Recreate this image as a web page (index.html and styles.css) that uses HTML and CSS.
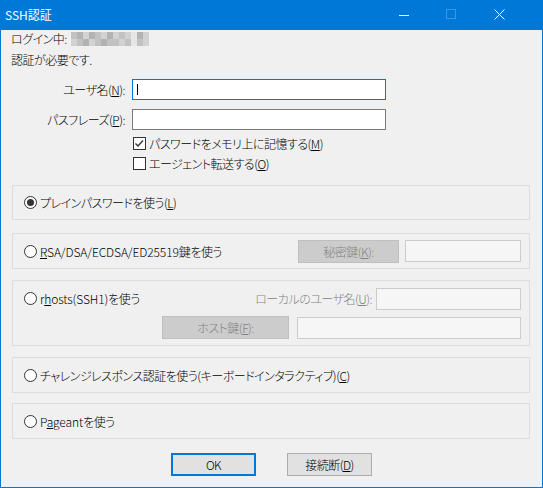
FILE: index.html
```html
<!DOCTYPE html>
<html>
  <head>
    <title>SSH認証</title>
    <link rel="stylesheet" href="styles.css">
  </head>
  <body>
    <div class="window">
      <div class="titlebar">
        <span class="title">SSH認証</span>
        <div class="caption">
          <svg class="cap-min" width="10" height="10"><path d="M0 4.5h10" stroke="#fff"/></svg>
          <svg class="cap-max" width="10" height="10"><rect x=".5" y=".5" width="9" height="9" fill="none" stroke="#7fb6e6" stroke-dasharray="1 1"/></svg>
          <svg class="cap-close" width="11" height="11"><path d="M.5 .5l10 10M10.5 .5l-10 10" stroke="#fff"/></svg>
        </div>
      </div>

      <div class="content">
        <div class="login">
          ログイン中:
          <span class="mosaic">
            <i class="m2"></i><i class="m3"></i><i class="m1"></i><i class="m3"></i><i class="m2"></i><i class="m1"></i><i class="m3"></i><i class="m1"></i><i class="m2"></i><i class="m1"></i><i class="m0"></i><i class="m3"></i><i class="m1"></i>
            <i class="m1"></i><i class="m2"></i><i class="m3"></i><i class="m1"></i><i class="m2"></i><i class="m3"></i><i class="m2"></i><i class="m2"></i><i class="m1"></i><i class="m2"></i><i class="m0"></i><i class="m2"></i><i class="m1"></i>
          </span>
        </div>
        <div class="msg">認証が必要です.</div>

        <div class="row row-user">
          <label>ユーザ名(<u>N</u>):</label>
          <div class="edit focus"><span class="caret"></span></div>
        </div>
        <div class="row row-pass">
          <label>パスフレーズ(<u>P</u>):</label>
          <div class="edit"></div>
        </div>
        <div class="checkrow check-first">
          <svg width="13" height="13"><rect x=".5" y=".5" width="12" height="12" fill="#fff" stroke="#333"/><path d="M2.5 6.5l2.5 2.5 5-5.5" fill="none" stroke="#333" stroke-width="1.4"/></svg>
          <span>パスワードをメモリ上に記憶する(<u>M</u>)</span>
        </div>
        <div class="checkrow check-second">
          <svg width="13" height="13"><rect x=".5" y=".5" width="12" height="12" fill="#fff" stroke="#333"/></svg>
          <span>エージェント転送する(<u>O</u>)</span>
        </div>

        <div class="group g-plain">
          <div class="radio">
            <svg width="13" height="13"><circle cx="6.5" cy="6.5" r="6" fill="#fff" stroke="#333"/><circle cx="6.5" cy="6.5" r="3.5" fill="#333"/></svg>
            <span>プレインパスワードを使う(<u>L</u>)</span>
          </div>
        </div>

        <div class="group g-key">
          <div class="radio grow">
            <svg width="13" height="13"><circle cx="6.5" cy="6.5" r="6" fill="#fff" stroke="#333"/></svg>
            <span><span class="lat"><u>R</u>SA/DSA/ECDSA/ED25519</span>鍵を使う</span>
          </div>
          <div class="btn disabled btn-key">秘密鍵(<u>K</u>):</div>
          <div class="edit disabled edit-key"></div>
        </div>

        <div class="group g-rhosts">
          <div class="rh-row">
            <div class="radio grow">
              <svg width="13" height="13"><circle cx="6.5" cy="6.5" r="6" fill="#fff" stroke="#333"/></svg>
              <span><span class="lat">r<u>h</u>osts(SSH1)</span>を使う</span>
            </div>
            <span class="dim-label">ローカルのユーザ名(<u>U</u>):</span>
            <div class="edit disabled edit-local"></div>
          </div>
          <div class="rh-row rh-second">
            <div class="btn disabled btn-host">ホスト鍵(<u>F</u>):</div>
            <div class="edit disabled edit-host"></div>
          </div>
        </div>

        <div class="group g-challenge">
          <div class="radio">
            <svg width="13" height="13"><circle cx="6.5" cy="6.5" r="6" fill="#fff" stroke="#333"/></svg>
            <span>チャレンジレスポンス認証を使う(キーボードインタラクティブ)(<u>C</u>)</span>
          </div>
        </div>

        <div class="group g-pageant">
          <div class="radio">
            <svg width="13" height="13"><circle cx="6.5" cy="6.5" r="6" fill="#fff" stroke="#333"/></svg>
            <span><span class="lat">P<u>a</u>geant</span>を使う</span>
          </div>
        </div>

        <div class="buttons">
          <div class="btn default">OK</div>
          <div class="btn">接続断(<u>D</u>)</div>
        </div>
      </div>
    </div>
  </body>
</html>
```

FILE: styles.css
```css
body {
  margin: 0;
  font-family: "Noto Sans CJK JP", "Noto Sans", sans-serif;
  font-size: 12px;
  color: #000;
}

.window {
  width: 543px;
  height: 488px;
  box-sizing: border-box;
  border: 1px solid #0078d7;
  border-top: 0;
  background: #f0f0f0;
  display: flex;
  flex-direction: column;
}

/* title bar */
.titlebar {
  height: 30px;
  flex: none;
  background: #0078d7;
  color: #fff;
  display: flex;
  align-items: center;
}

.title {
  flex: 1;
  padding-left: 4px;
  line-height: 16px;
  margin-top: -1px;
}

.caption {
  display: flex;
  align-items: center;
  padding-right: 37px;
}

.cap-min {
  margin-top: 1px;
}

.cap-max {
  margin-left: 37px;
  margin-top: -2px;
}

.cap-close {
  margin-left: 38px;
  margin-top: -1px;
}

/* dialog body */
.content {
  display: flex;
  flex-direction: column;
  padding-left: 10px;
  font-weight: 300;
  font-feature-settings: "palt";
  letter-spacing: -0.5px;
}

.lat {
  letter-spacing: -0.1px;
}

u {
  text-decoration: underline;
  text-underline-offset: 1px;
}

.login {
  margin-top: 1px;
  height: 16px;
  line-height: 16px;
  display: flex;
  align-items: center;
}

.mosaic {
  display: grid;
  grid-template-columns: repeat(13, 6px);
  grid-auto-rows: 7px;
  margin-left: 4px;
}

.mosaic i { display: block; }
.mosaic .m0 { background: #e6e6e6; }
.mosaic .m1 { background: #d2d2d2; }
.mosaic .m2 { background: #c2c2c2; }
.mosaic .m3 { background: #b3b3b3; }
.mosaic .m4 { background: #a3a3a3; }

.msg {
  margin-top: 5px;
  line-height: 16px;
}

/* user / passphrase */
.row {
  display: flex;
  align-items: center;
  height: 21px;
}

.row label {
  width: 114px;
  margin-right: 7px;
  text-align: right;
}

.row-user { margin-top: 11px; }
.row-pass { margin-top: 9px; }

.edit {
  width: 254px;
  height: 21px;
  box-sizing: border-box;
  border: 1px solid #7a7a7a;
  background: #fff;
}

.edit.focus {
  border-color: #0078d7;
}

.caret {
  display: block;
  width: 1px;
  height: 11px;
  margin: 4px 0 0 4px;
  background: #000;
}

.checkrow {
  display: flex;
  align-items: center;
  height: 16px;
  margin-left: 122px;
}

.checkrow svg {
  margin-right: 3px;
}

.check-first { margin-top: 5px; }
.check-second { margin-top: 4px; }

/* auth method groups */
.group {
  width: 518px;
  height: 36px;
  margin-left: 1px;
  box-sizing: border-box;
  border: 1px solid #dcdcdc;
  padding: 0 8px 0 11px;
  display: flex;
  align-items: center;
}

.g-plain { height: 35px; margin-top: 14px; }
.g-key { margin-top: 13px; }
.g-rhosts {
  height: 66px;
  margin-top: 11px;
  flex-direction: column;
  align-items: stretch;
  justify-content: flex-start;
  padding-top: 6px;
}
.g-challenge { margin-top: 11px; }
.g-pageant { margin-top: 10px; }

.radio {
  display: flex;
  align-items: center;
}

.radio svg {
  margin-right: 3px;
}

.grow {
  flex: 1;
}

.rh-row {
  display: flex;
  align-items: center;
  height: 23px;
}

.rh-second {
  justify-content: flex-end;
  margin-top: 6px;
}

.dim-label {
  color: #838383;
  margin-right: 4px;
}

.edit.disabled {
  border-color: #cccccc;
  background: #f6f6f6;
  height: 22px;
}

.edit-key { width: 116px; margin-left: 6px; }
.edit-local { width: 145px; height: 23px; }
.edit-host { width: 224px; height: 23px; margin-left: 8px; }

/* buttons */
.btn {
  width: 85px;
  height: 23px;
  box-sizing: border-box;
  border: 1px solid #adadad;
  background: #e1e1e1;
  display: flex;
  align-items: center;
  justify-content: center;
}

.btn.default {
  border: 2px solid #0078d7;
}

.btn.disabled {
  background: #cccccc;
  border-color: #bfbfbf;
  color: #838383;
}

.btn-key { width: 101px; }
.btn-host { width: 127px; }

.buttons {
  display: flex;
  justify-content: center;
  gap: 31px;
  margin-top: 14px;
  margin-left: -10px;
}
```
